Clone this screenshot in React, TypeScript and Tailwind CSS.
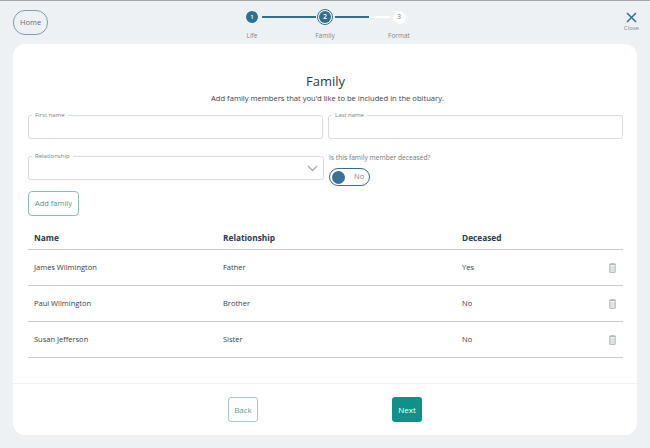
const rows = [
  { name: "James Wilmington", rel: "Father", dec: "Yes" },
  { name: "Paul Wilmington", rel: "Brother", dec: "No" },
  { name: "Susan Jefferson", rel: "Sister", dec: "No" },
];

function Trash() {
  return (
    <svg width="7" height="10" viewBox="0 0 7 10" fill="none" stroke="#a9afb3" strokeWidth="0.9">
      <path d="M0 1.2h7M2.2 1.2V.4h2.6v.8" />
      <rect x="0.8" y="1.6" width="5.4" height="8" rx="0.5" />
      <path d="M0.8 4h5.4M0.8 6h5.4M0.8 8h5.4" strokeWidth="0.7" />
    </svg>
  );
}

function Field({ label, chevron }: { label: string; chevron?: boolean }) {
  return (
    <div className="relative h-[24px] flex-1 rounded-[3px] border border-[#d9dcde] bg-white">
      <span className="absolute left-[3px] top-[-5px] bg-white px-[3px] text-[6px] leading-[9px] text-[#7a8388]">
        {label}
      </span>
      {chevron && (
        <svg className="absolute right-[5px] top-[8px]" width="11" height="7" viewBox="0 0 11 7" fill="none" stroke="#a4acb0" strokeWidth="1.3">
          <path d="M1 1l4.5 4.5L10 1" />
        </svg>
      )}
    </div>
  );
}

function Step({ label, children }: { label: string; children: React.ReactNode }) {
  return (
    <div className="flex w-[16px] flex-col items-center">
      <div className="flex h-[18px] items-center justify-center">{children}</div>
      <span className="mt-[5px] whitespace-nowrap text-[6.5px] leading-[10px] text-[#7d878d]">{label}</span>
    </div>
  );
}

export default function App() {
  return (
    <div
      className="flex h-[448px] w-[650px] flex-col overflow-hidden border-t border-[#a3a6a8] bg-[#edf1f4] text-[#3a4248]"
      style={{ fontFamily: '"Open Sans", sans-serif' }}
    >
      <header className="relative flex h-[43px] shrink-0 items-start justify-between pl-[13px] pr-[11px] pt-[9px]">
        <button className="flex h-[25px] w-[35px] items-center justify-center rounded-[12px] border border-[#7f9fae] text-[7.5px] text-[#5f7078]">
          Home
        </button>
        <div className="absolute left-[244px] top-[7px] flex items-start">
          <Step label="Life">
            <div className="flex h-[12px] w-[12px] items-center justify-center rounded-full bg-[#2f6f8f] text-[6px] font-semibold text-white">1</div>
          </Step>
          <div className="ml-[2px] mr-[1px] mt-[8px] h-[2px] w-[54px] bg-[#2f6f8f]" />
          <Step label="Family">
            <div className="flex h-[16px] w-[16px] items-center justify-center rounded-full border border-[#2f6f8f] bg-white">
              <div className="flex h-[12px] w-[12px] items-center justify-center rounded-full bg-[#2f6f8f] text-[7px] font-semibold text-white">2</div>
            </div>
          </Step>
          <div className="ml-[2px] mt-[8px] h-[2px] w-[34px] bg-[#2f6f8f]" />
          <div className="mr-[1px] mt-[8px] h-[2px] w-[21px] bg-white" />
          <Step label="Format">
            <div className="flex h-[13px] w-[13px] items-center justify-center rounded-full bg-white text-[7px] text-[#6f7a80]">3</div>
          </Step>
        </div>
        <div className="flex flex-col items-center pt-[2px]">
          <svg width="11" height="11" viewBox="0 0 11 11" fill="none" stroke="#2f6f8f" strokeWidth="1.5">
            <path d="M1 1l9 9M10 1l-9 9" />
          </svg>
          <span className="mt-[1px] text-[6px] leading-[9px] text-[#7d878d]">Close</span>
        </div>
      </header>

      <main className="mx-[13px] flex h-[391px] flex-col rounded-[12px] bg-white">
        <div className="flex-1 pl-[15px] pr-[14px]">
          <h1 className="mt-[27px] text-center text-[13px] leading-[20px] text-[#2f3a42]">Family</h1>
          <p className="mt-[1px] pl-[4px] text-center text-[7.6px] leading-[12px] text-[#3a4248]">
            Add family members that you’d like to be included in the obituary.
          </p>
          <div className="mt-[11px] flex gap-[5px]">
            <Field label="First name" />
            <Field label="Last name" />
          </div>
          <div className="mt-[17px] flex gap-[5px]">
            <Field label="Relationship" chevron />
            <div className="relative h-[24px] flex-1">
              <p className="mt-[-4px] text-[6.7px] leading-[11px] text-[#6f7a80]">Is this family member deceased?</p>
              <div className="mt-[5px] flex h-[18px] w-[41px] items-center rounded-full border border-[#2f6f8f] bg-white pl-[2px]">
                <div className="h-[13px] w-[13px] rounded-full bg-[#3c7096]" />
                <span className="ml-[9px] text-[7.5px] text-[#7d878d]">No</span>
              </div>
            </div>
          </div>
          <button className="mt-[11px] flex h-[25px] w-[51px] items-center justify-center rounded-[4px] border border-[#8fbfb9] text-[7.5px] text-[#4f948e]">
            Add family
          </button>
          <div className="mt-[12px] grid h-[22px] grid-cols-[189px_239px_1fr] border-b border-[#c9cdcf] pl-[6px] text-[8.3px] font-bold leading-[20px] text-[#2b3a4f]">
            <span>Name</span>
            <span>Relationship</span>
            <span>Deceased</span>
          </div>
          {rows.map((r) => (
            <div
              key={r.name}
              className="grid h-[36px] grid-cols-[189px_239px_1fr_auto] items-center border-b border-[#c9cdcf] pl-[6px] pr-[7px] text-[7.5px] text-[#3a4248]"
            >
              <span className="pt-[1px]">{r.name}</span>
              <span className="pt-[1px]">{r.rel}</span>
              <span className="pt-[1px]">{r.dec}</span>
              <Trash />
            </div>
          ))}
        </div>
        <footer className="flex h-[52px] shrink-0 items-start gap-[134px] border-t border-[#f1f2f3] pl-[215px] pt-[13px]">
          <button className="flex h-[25px] w-[30px] items-center justify-center rounded-[3px] border border-[#a5c7c5] text-[8px] text-[#5f9a95]">
            Back
          </button>
          <button className="flex h-[25px] w-[30px] items-center justify-center rounded-[3px] bg-[#0f918a] text-[8px] text-white">
            Next
          </button>
        </footer>
      </main>
    </div>
  );
}
